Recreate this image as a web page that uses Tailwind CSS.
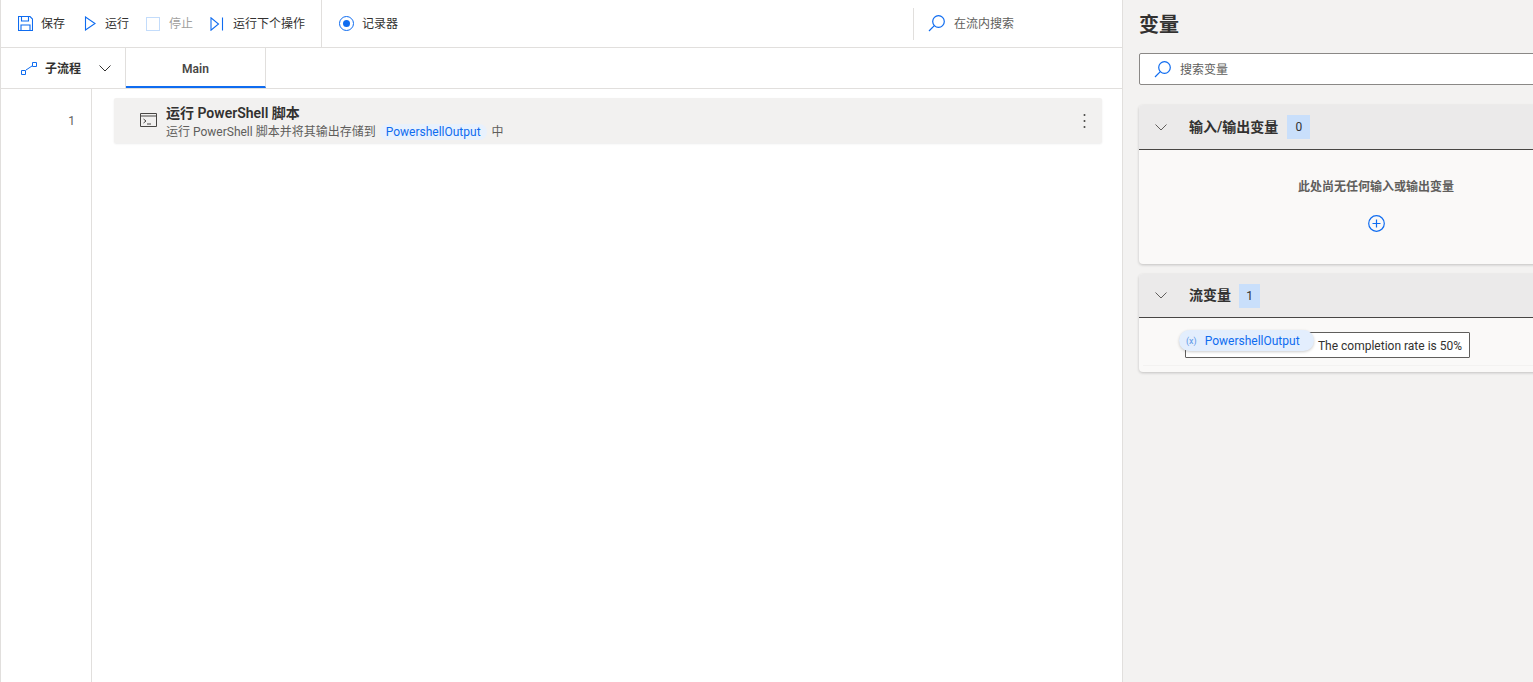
<!DOCTYPE html>
<html lang="zh">
<head>
<meta charset="utf-8">
<script src="https://cdn.jsdelivr.net/npm/@tailwindcss/browser@4"></script>
</head>
<body class="m-0 overflow-hidden bg-white">
<div class="flex h-[682px] w-[1533px] overflow-hidden font-['Roboto','Noto_Sans_CJK_SC',sans-serif] text-[12px] text-[#323130]">
  <main class="flex h-full w-[1123px] shrink-0 flex-col border-r border-l border-[#e1dfdd] bg-white">
    <div class="flex h-[48px] shrink-0 items-center border-b border-[#e1dfdd]">
      <div class="flex h-full w-[321px] shrink-0 items-center border-r border-[#e1dfdd] pl-[17px]">
        <span class="flex items-center gap-[8px]">
          <svg class="h-[15px] w-[15px]" viewBox="0 0 15 15" fill="none" stroke="#0f6cf0" stroke-width="1.100"><path d="M.5.5h11.500l2.500 2.500v11.500H.5z"/><path d="M3.500.5v4.500h7V.5M3 14.500V9h9v5.500"/></svg>
          <span>保存</span>
        </span>
        <span class="ml-[19px] flex items-center gap-[9px]">
          <svg class="h-[15px] w-[12px]" viewBox="0 0 12 15" fill="none" stroke="#0f6cf0" stroke-width="1.100"><path d="M1.500 1v13l9.500-6.500z"/></svg>
          <span>运行</span>
        </span>
        <span class="ml-[17px] flex items-center gap-[9px] text-[#a19f9d]">
          <span class="h-[14px] w-[14px] border border-[#c3dcfb]"></span>
          <span>停止</span>
        </span>
        <span class="ml-[17px] flex items-center gap-[9px]">
          <svg class="h-[14px] w-[14px]" viewBox="0 0 14 14" fill="none" stroke="#0f6cf0" stroke-width="1.100"><path d="M1 .8v12.400l7.500-6.200zM12.500 .5v13"/></svg>
          <span>运行下个操作</span>
        </span>
      </div>
      <div class="flex items-center gap-[8px] pl-[17px]">
        <span class="flex h-[15px] w-[15px] items-center justify-center rounded-full border border-[#0f6cf0]"><span class="h-[7px] w-[7px] rounded-full bg-[#0f6cf0]"></span></span>
        <span>记录器</span>
      </div>
      <div class="ml-[515px] flex h-[32px] items-center gap-[9px] border-l border-[#e1dfdd] pl-[14px] text-[#605e5c]">
        <svg class="h-[17px] w-[17px]" viewBox="0 0 17 17" fill="none" stroke="#0f6cf0" stroke-width="1.200"><circle cx="10.500" cy="6.500" r="5.800"/><path d="M6.300 10.700 1 16"/></svg>
        <span>在流内搜索</span>
      </div>
    </div>
    <div class="flex h-[41px] shrink-0 border-b border-[#e1dfdd]">
      <div class="flex w-[125px] shrink-0 items-center border-r border-[#e1dfdd] pl-[20px]">
        <svg class="h-[13px] w-[16px]" viewBox="0 0 16 13" fill="none" stroke="#0f6cf0" stroke-width="1"><path d="M.5 8.500h4v4h-4zM11.500.5h4v4h-4zM5 8l6-4"/></svg>
        <span class="ml-[8px] translate-y-[1px] font-semibold">子流程</span>
        <svg class="ml-[18px] h-[8px] w-[12px]" viewBox="0 0 12 8" fill="none" stroke="#323130" stroke-width="1"><path d="M.5 1.500 6 7l5.500-5.500"/></svg>
      </div>
      <div class="flex h-[40px] w-[140px] shrink-0 items-center justify-center border-r border-b-2 border-r-[#e1dfdd] border-b-[#0f6cf0] pt-[3px] font-semibold text-[#484644]">Main</div>
    </div>
    <div class="flex min-h-0 flex-1">
      <div class="w-[91px] shrink-0 border-r border-[#e1dfdd] pt-[24px] pr-[16px] text-right leading-[16px] text-[#605e5c]">1</div>
      <div class="flex-1 pt-[9px] pr-[20px] pl-[22px]">
        <div class="relative flex h-[45px] items-center rounded-[2px] bg-[#f2f1f0] pl-[26px] shadow-[0_1px_2px_rgba(0,0,0,0.08)]">
          <svg class="h-[14px] w-[17px] translate-y-[-1px]" viewBox="0 0 17 14" fill="none" stroke="#484644" stroke-width="1"><path d="M.5.5h16v13H.5zM.5 3h16M3.500 6l2.500 2-2.500 2M7 11h4"/></svg>
          <div class="ml-[9px] flex flex-col self-start pt-[7px]">
            <span class="text-[14px] leading-[17px] font-semibold">运行 PowerShell 脚本</span>
            <span class="mt-[1px] flex h-[17px] items-center text-[#605e5c]">运行 PowerShell 脚本并将其输出存储到<span class="mr-[5px] ml-[4px] rounded-full bg-[#e8f1fd] px-[6px] leading-[16px] text-[#0f6cf0]">PowershellOutput</span>中</span>
          </div>
          <svg class="absolute top-[15px] right-[16px] h-[16px] w-[3px]" viewBox="0 0 3 16" fill="#484644"><circle cx="1.500" cy="2" r="1"/><circle cx="1.500" cy="8" r="1"/><circle cx="1.500" cy="14" r="1"/></svg>
        </div>
      </div>
    </div>
  </main>
  <aside class="flex h-full min-w-0 flex-1 flex-col overflow-hidden bg-[#f3f2f1] pl-[16px]">
    <h1 class="mt-[11px] h-[30px] text-[20px] leading-[28px] font-bold">变量</h1>
    <div class="mt-[12px] flex h-[32px] w-[474px] shrink-0 items-center gap-[9px] rounded-[2px] border border-[#8a8886] bg-white pl-[14px] text-[#605e5c]">
      <svg class="h-[17px] w-[17px]" viewBox="0 0 17 17" fill="none" stroke="#0f6cf0" stroke-width="1.200"><circle cx="10.500" cy="6.500" r="5.800"/><path d="M6.300 10.700 1 16"/></svg>
      <span class="translate-y-[1px]">搜索变量</span>
    </div>
    <section class="mt-[20px] w-[474px] shrink-0 rounded-[4px] bg-[#faf9f8] shadow-[0_1px_3px_rgba(0,0,0,0.2)]">
      <div class="flex h-[45px] items-center rounded-t-[4px] border-b border-[#484644] bg-[#ebeaea] pl-[16px]">
        <svg class="h-[7px] w-[12px]" viewBox="0 0 12 7" fill="none" stroke="#605e5c" stroke-width="1"><path d="M.5.5 6 6l5.500-5.500"/></svg>
        <span class="ml-[22px] text-[14px] font-semibold">输入/输出变量</span>
        <span class="ml-[9px] flex h-[24px] w-[23px] items-center justify-center bg-[#c9dffb]">0</span>
      </div>
      <div class="flex h-[114px] flex-col items-center pt-[28px]">
        <span class="leading-[18px] font-semibold text-[#605e5c]">此处尚无任何输入或输出变量</span>
        <svg class="mt-[19px] h-[17px] w-[17px]" viewBox="0 0 17 17" fill="none" stroke="#0f6cf0" stroke-width="1.200"><circle cx="8.500" cy="8.500" r="7.800"/><path d="M8.500 4.500v8M4.500 8.500h8"/></svg>
      </div>
    </section>
    <section class="mt-[10px] w-[474px] shrink-0 rounded-[4px] bg-[#faf9f8] shadow-[0_1px_3px_rgba(0,0,0,0.2)]">
      <div class="flex h-[44px] items-center rounded-t-[4px] border-b border-[#484644] bg-[#ebeaea] pl-[16px]">
        <svg class="h-[7px] w-[12px]" viewBox="0 0 12 7" fill="none" stroke="#605e5c" stroke-width="1"><path d="M.5.5 6 6l5.500-5.500"/></svg>
        <span class="ml-[22px] text-[14px] font-semibold">流变量</span>
        <span class="ml-[8px] flex h-[24px] w-[21px] items-center justify-center bg-[#c9dffb]">1</span>
      </div>
      <div class="relative h-[54px]">
        <div class="absolute top-[14px] left-[46px] flex h-[26px] w-[285px] items-center justify-end rounded-[1px] border border-[#605e5c] bg-white pt-[1px] pr-[7px] whitespace-nowrap">The completion rate is 50%</div>
        <div class="absolute top-[12px] left-[40px] flex h-[21px] w-[135px] items-center rounded-full bg-[#e3eefd] pl-[7px] text-[#0f6cf0] shadow-[0_1px_3px_rgba(0,0,0,0.2)]">
          <span class="text-[9px] leading-[12px] text-[#5b96e8]">(x)</span>
          <span class="ml-[8px] whitespace-nowrap">PowershellOutput</span>
        </div>
        <div class="absolute right-0 bottom-[6px] left-[4px] h-px bg-[#f3f2f1]"></div>
      </div>
    </section>
  </aside>
</div>
</body>
</html>
